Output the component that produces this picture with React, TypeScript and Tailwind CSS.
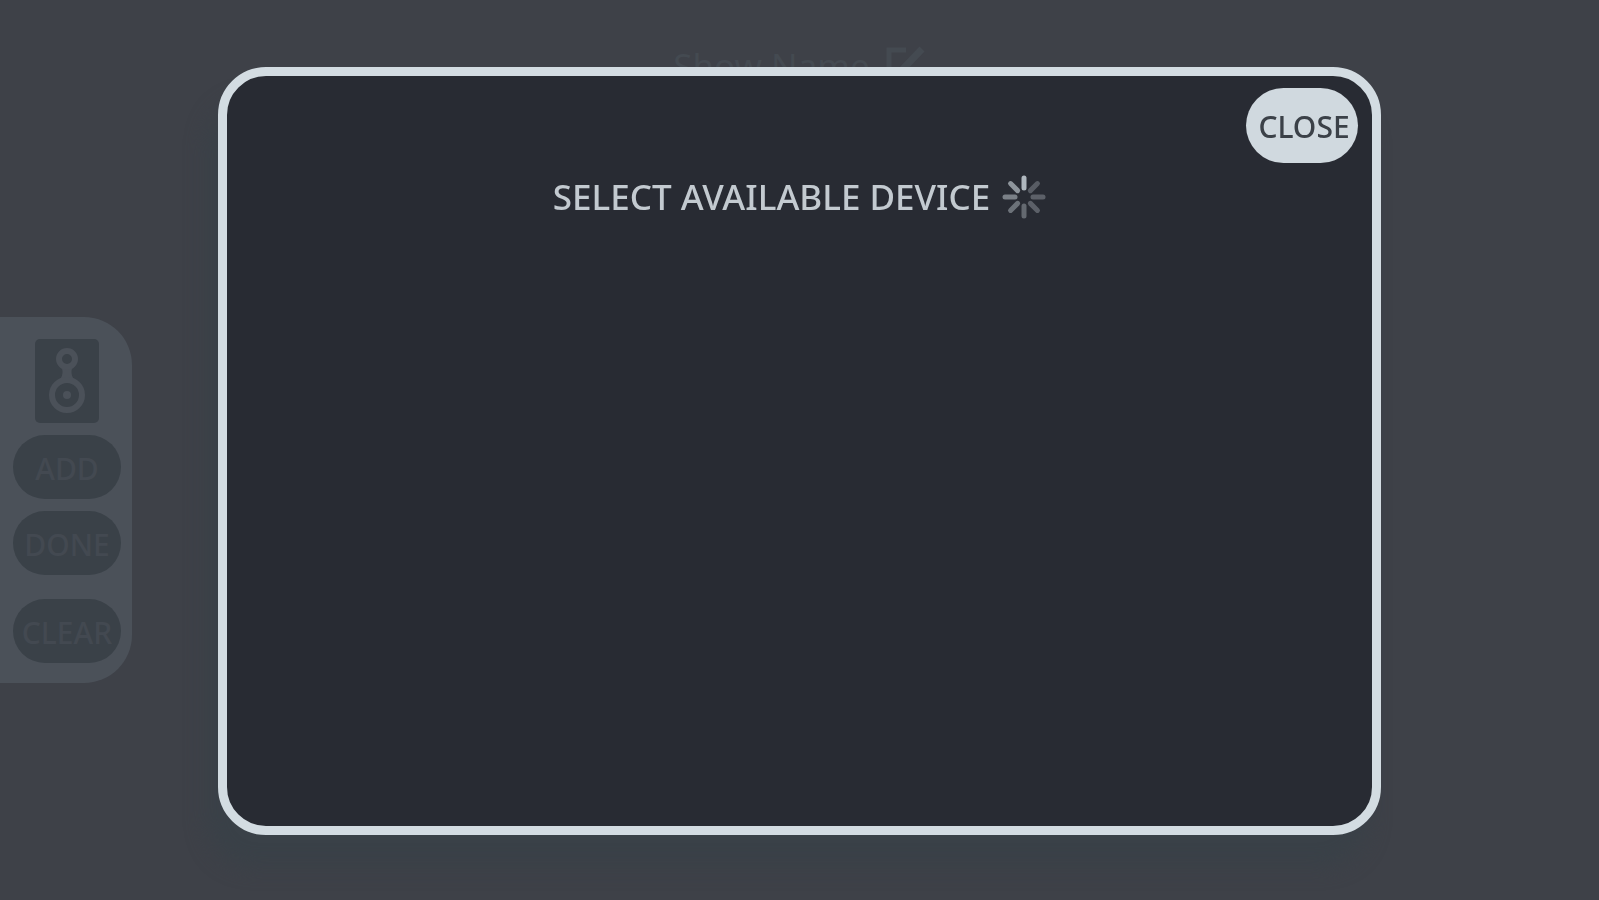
import { useState } from "react";

const spokes = [
  { angle: 0, opacity: 0.8 },
  { angle: 45, opacity: 0.28 },
  { angle: 90, opacity: 0.3 },
  { angle: 135, opacity: 0.3 },
  { angle: 180, opacity: 0.35 },
  { angle: 225, opacity: 0.4 },
  { angle: 270, opacity: 0.48 },
  { angle: 315, opacity: 0.6 },
];

function Spinner() {
  return (
    <svg viewBox="0 0 44 44" className="w-11 h-11 shrink-0" role="status" aria-label="Searching">
      {spokes.map((s) => (
        <line
          key={s.angle}
          x1="22"
          y1="3"
          x2="22"
          y2="13"
          stroke="#d3dce2"
          strokeWidth="5"
          strokeLinecap="round"
          opacity={s.opacity}
          transform={`rotate(${s.angle} 22 22)`}
        />
      ))}
    </svg>
  );
}

function SpeakerIcon() {
  return (
    <svg viewBox="0 0 64 84" className="w-16 h-[84px]" aria-hidden="true">
      <rect width="64" height="84" rx="5" fill="#3a4148" />
      <path d="M24 25 Q32 34 22 44 H42 Q32 34 40 25Z" fill="#4b5159" />
      <circle cx="32" cy="20" r="8" fill="#3a4148" stroke="#4b5159" strokeWidth="6" />
      <circle cx="32" cy="56" r="15" fill="#3a4148" stroke="#4b5159" strokeWidth="6" />
      <circle cx="32" cy="56" r="4" fill="#4b5159" />
    </svg>
  );
}

function EditIcon() {
  return (
    <svg viewBox="0 0 40 40" className="w-10 h-10" fill="none" stroke="currentColor" strokeWidth="5">
      <path d="M20 4H3v33h31V22" />
      <path d="M36 3 15 25" strokeWidth="7" />
    </svg>
  );
}

function SideButton({ children }: { children: React.ReactNode }) {
  return (
    <button
      type="button"
      className="w-[108px] h-16 pt-1 rounded-full bg-[#3a4148] text-[#434951] text-[30px] font-medium leading-none flex items-center justify-center"
    >
      {children}
    </button>
  );
}

export default function App() {
  const [open, setOpen] = useState(true);

  return (
    <div className="relative min-h-screen bg-[#3e4148] font-['Noto_Sans',sans-serif] overflow-hidden flex items-center">
      {/* Show title */}
      <header className="absolute top-[46px] inset-x-0 flex justify-center gap-4 text-[#444a51]">
        <h1 className="text-[35px] leading-10">Show Name</h1>
        <button type="button" aria-label="Edit name">
          <EditIcon />
        </button>
      </header>

      {/* Device drawer */}
      <aside className="w-[132px] pt-[22px] pb-5 pl-[13px] pr-[11px] rounded-r-[48px] bg-[#4b5159] mt-[100px] flex flex-col items-center gap-3">
        <SpeakerIcon />
        <SideButton>ADD</SideButton>
        <SideButton>DONE</SideButton>
        <div className="pt-3">
          <SideButton>CLEAR</SideButton>
        </div>
      </aside>

      {/* Device picker */}
      {open && (
        <div className="fixed inset-0 pt-[67px] pb-[65px] px-[218px] flex">
          <section
            role="dialog"
            aria-labelledby="picker-title"
            className="relative flex-1 rounded-[48px] border-[9px] border-[#d3dce2] bg-[#282b33] shadow-[-12px_32px_20px_#3a4148] pt-[97px]"
          >
            <button
              type="button"
              onClick={() => setOpen(false)}
              className="absolute top-3 right-3.5 w-28 h-[75px] rounded-full bg-[#d0d9df] text-[#3b4148] text-[30px] font-medium leading-none pl-1 pt-0.5 flex items-center justify-center"
            >
              CLOSE
            </button>
            <div className="flex items-center justify-center gap-3">
              <h2 id="picker-title" className="text-[35px] font-medium leading-[48px] text-[#c3cad0]">
                SELECT AVAILABLE DEVICE
              </h2>
              <Spinner />
            </div>
          </section>
        </div>
      )}
    </div>
  );
}
